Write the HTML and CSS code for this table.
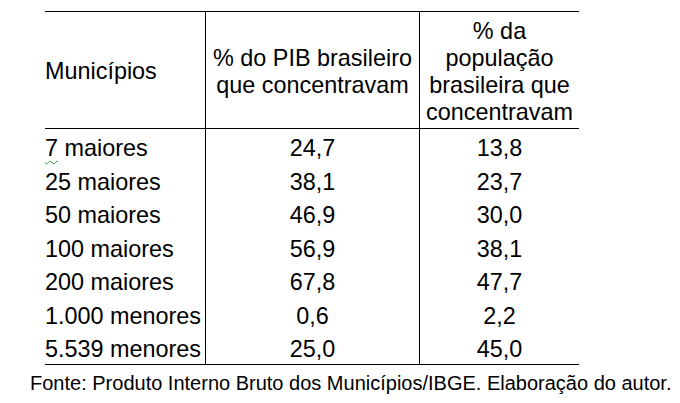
FILE: index.html
```html
<!DOCTYPE html>
<html lang="pt-BR">
<head>
<meta charset="utf-8">
<title>Municípios e PIB</title>
<link rel="stylesheet" href="styles.css">
</head>
<body>
<div class="page">
  <div class="grid">
    <div class="hcell c1"><div class="ht">Municípios</div></div>
    <div class="hcell c2"><div class="ht center">% do PIB brasileiro<br>que concentravam</div></div>
    <div class="hcell c3"><div class="ht center">% da<br>população<br>brasileira que<br>concentravam</div></div>

    <div class="cell c1"><span class="spell">7</span> maiores</div>
    <div class="cell c2 center">24,7</div>
    <div class="cell c3 center">13,8</div>

    <div class="cell c1">25 maiores</div>
    <div class="cell c2 center">38,1</div>
    <div class="cell c3 center">23,7</div>

    <div class="cell c1">50 maiores</div>
    <div class="cell c2 center">46,9</div>
    <div class="cell c3 center">30,0</div>

    <div class="cell c1">100 maiores</div>
    <div class="cell c2 center">56,9</div>
    <div class="cell c3 center">38,1</div>

    <div class="cell c1">200 maiores</div>
    <div class="cell c2 center">67,8</div>
    <div class="cell c3 center">47,7</div>

    <div class="cell c1">1.000 menores</div>
    <div class="cell c2 center">0,6</div>
    <div class="cell c3 center">2,2</div>

    <div class="cell c1">5.539 menores</div>
    <div class="cell c2 center">25,0</div>
    <div class="cell c3 center">45,0</div>
  </div>
  <p class="caption">Fonte: Produto Interno Bruto dos Municípios/IBGE. Elaboração do autor.</p>
</div>
</body>
</html>
```

FILE: styles.css
```css
html, body {
  margin: 0;
  padding: 0;
  background: #ffffff;
}

body {
  font-family: "Liberation Sans", Arial, sans-serif;
  color: #000000;
}

.page {
  padding-top: 11px;
}

.grid {
  display: grid;
  grid-template-columns: 160px 214px 160px;
  grid-auto-rows: 33.57px;
  grid-template-rows: 117px;
  margin-left: 45px;
  width: 534px;
  border-top: 1px solid #000;
  border-bottom: 1px solid #000;
  font-size: 23.4px;
  line-height: 27px;
}

.hcell {
  display: flex;
  align-items: center;
  padding-top: 3px;
  border-bottom: 1px solid #000;
  box-sizing: border-box;
}

.ht {
  width: 100%;
}

.cell {
  box-sizing: border-box;
  padding-top: 6px;
  white-space: nowrap;
}

.c2, .c3 {
  border-left: 1px solid #000;
}

.center {
  text-align: center;
}

.spell {
  text-decoration: underline wavy #2f9a2f;
  text-decoration-thickness: 1px;
  text-underline-offset: 4px;
}

.caption {
  margin: 6px 0 0 30px;
  font-size: 20px;
  line-height: 24px;
  white-space: nowrap;
}
```
